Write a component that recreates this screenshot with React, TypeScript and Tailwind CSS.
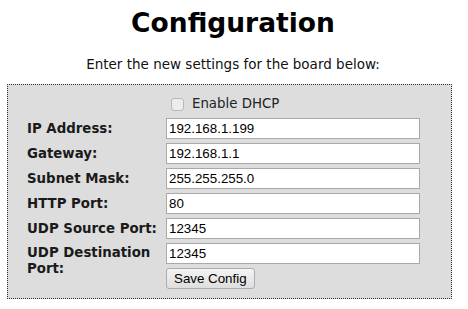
import React from 'react';

const fields: { label: string; value: string }[] = [
  { label: 'IP Address:', value: '192.168.1.199' },
  { label: 'Gateway:', value: '192.168.1.1' },
  { label: 'Subnet Mask:', value: '255.255.255.0' },
  { label: 'HTTP Port:', value: '80' },
  { label: 'UDP Source Port:', value: '12345' },
];

const inputCls =
  "h-[21px] w-[254px] border border-[#a9a9a9] bg-white px-[2px] text-[13.33px] leading-[19px] text-black font-['Liberation_Sans',Arial,sans-serif] outline-none";

export default function App() {
  return (
    <div className="w-[468px] h-[309px] bg-white font-['DejaVu_Sans',Verdana,sans-serif] text-black">
      <div className="w-[459px] pl-[7px]">
        {/* heading */}
        <h1 className="pt-[7px] text-center text-[26.5px] leading-[31px] font-bold">Configuration</h1>
        <p className="mt-[18px] text-center text-[13.5px] leading-[16px] text-[#111]">
          Enter the new settings for the board below:
        </p>

        {/* settings box */}
        <div className="mt-[12px] w-[445px] border border-dotted border-[#333] bg-[#dddddd] pl-[19px] pt-[9px] pb-[9px]">
          <div className="grid grid-cols-[139px_254px] gap-y-[4px] text-[13.33px]">
            <div />
            <label className="flex h-[20px] items-center gap-[8px] pl-[5px] text-[#222]">
              <span className="inline-block h-[13px] w-[13px] rounded-[3px] border border-[#b9b9b9] bg-[#ececec]" />
              Enable DHCP
            </label>

            {fields.map((f) => (
              <React.Fragment key={f.label}>
                <div className="flex h-[21px] items-center font-bold leading-[16px] text-[#1a1a1a]">{f.label}</div>
                <input className={inputCls} defaultValue={f.value} readOnly />
              </React.Fragment>
            ))}

            <div className="mt-[2px] font-bold leading-[16px] text-[#1a1a1a]">
              UDP Destination
              <br />
              Port:
            </div>
            <div className="flex flex-col items-start gap-[4px]">
              <input className={inputCls} defaultValue="12345" readOnly />
              <button className="h-[21px] rounded-[3px] border border-[#acacac] bg-gradient-to-b from-[#f4f4f4] to-[#dedede] px-[7px] text-[13.33px] leading-[19px] text-black font-['Liberation_Sans',Arial,sans-serif]">
                Save Config
              </button>
            </div>
          </div>
        </div>
      </div>
    </div>
  );
}
